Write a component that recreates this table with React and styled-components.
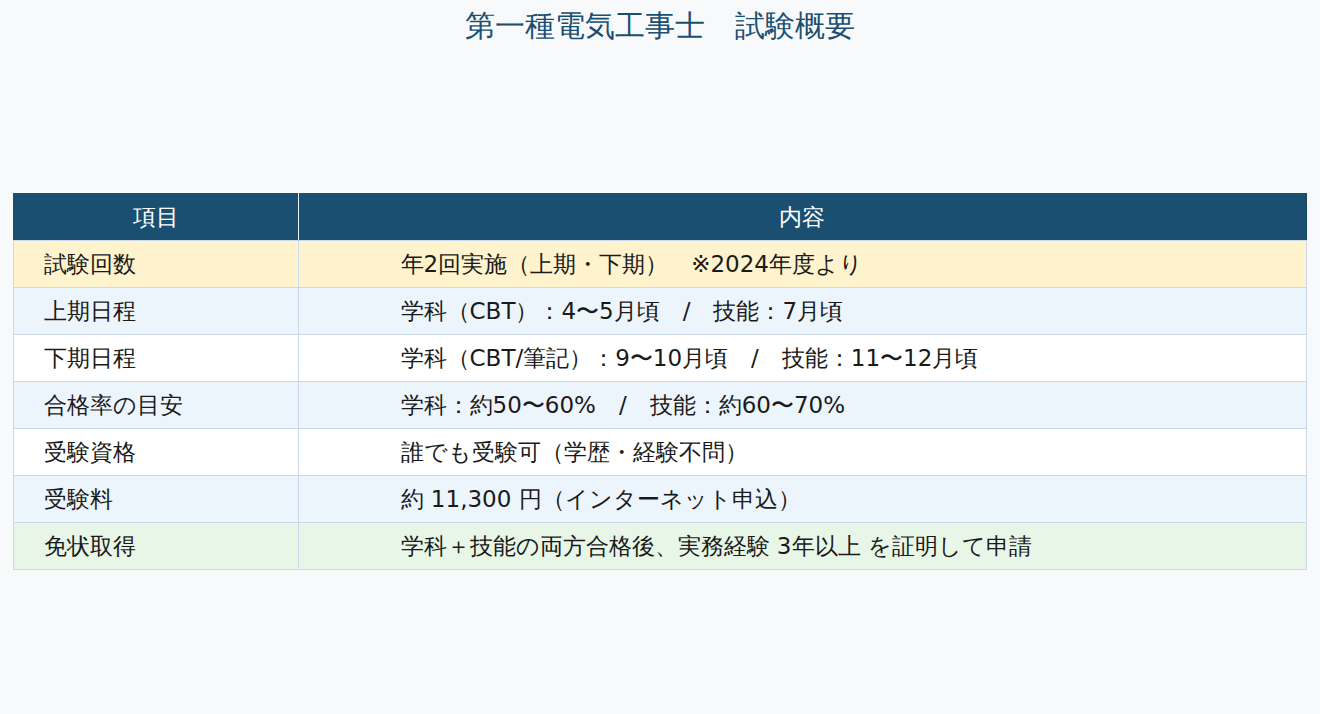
import React from "react";
import styled, { createGlobalStyle } from "styled-components";

const Global = createGlobalStyle`
  html, body { margin: 0; padding: 0; background: #f8f9fa; }
  body { font-family: "DejaVu Sans", sans-serif; color: #1a1a1a; }
`;

const Page = styled.div`
  width: 1320px;
  min-height: 714px;
  background: #f8f9fa;
`;

const Title = styled.h1`
  margin: 0;
  padding-top: 6px;
  height: 40px;
  line-height: 40px;
  text-align: center;
  font-size: 30px;
  font-weight: normal;
  color: #1b4f72;
`;

const Table = styled.table`
  width: 98%;
  margin: 147px auto 0;
  border-collapse: collapse;
  font-size: 23px;
`;

const HeadCell = styled.th`
  background: #1b4f72;
  color: #ffffff;
  font-weight: normal;
  height: 46px;
  padding: 0;
  text-align: center;
  border: 1px solid #c9d9ea;
  border-top-color: #1b4f72;
  border-left-color: #1b4f72;
  border-right-color: ${(p) => (p.$last ? "#17445f" : "#e6eef6")};
  width: ${(p) => p.$w || "auto"};
`;

const rowBg = {
  yellow: "#fef3cd",
  blue: "#edf5fc",
  white: "#ffffff",
  green: "#e8f6e7",
};

const Row = styled.tr`
  background: ${(p) => rowBg[p.$tone]};
`;

const Cell = styled.td`
  height: 46px;
  padding: 0 0 0 ${(p) => (p.$wide ? "102px" : "30px")};
  border: 1px solid #c9d9ea;
  vertical-align: middle;
  white-space: nowrap;
`;

const rows = [
  ["試験回数", "年2回実施（上期・下期）　※2024年度より", "yellow"],
  ["上期日程", "学科（CBT）：4〜5月頃　/　技能：7月頃", "blue"],
  ["下期日程", "学科（CBT/筆記）：9〜10月頃　/　技能：11〜12月頃", "white"],
  ["合格率の目安", "学科：約50〜60%　/　技能：約60〜70%", "blue"],
  ["受験資格", "誰でも受験可（学歴・経験不問）", "white"],
  ["受験料", "約 11,300 円（インターネット申込）", "blue"],
  ["免状取得", "学科＋技能の両方合格後、実務経験 3年以上 を証明して申請", "green"],
];

export default function App() {
  return (
    <Page>
      <Global />
      <Title>第一種電気工事士　試験概要</Title>
      <Table>
        <thead>
          <tr>
            <HeadCell $w="22%">項目</HeadCell>
            <HeadCell $last>内容</HeadCell>
          </tr>
        </thead>
        <tbody>
          {rows.map(([k, v, tone]) => (
            <Row key={k} $tone={tone}>
              <Cell>{k}</Cell>
              <Cell $wide>{v}</Cell>
            </Row>
          ))}
        </tbody>
      </Table>
    </Page>
  );
}
